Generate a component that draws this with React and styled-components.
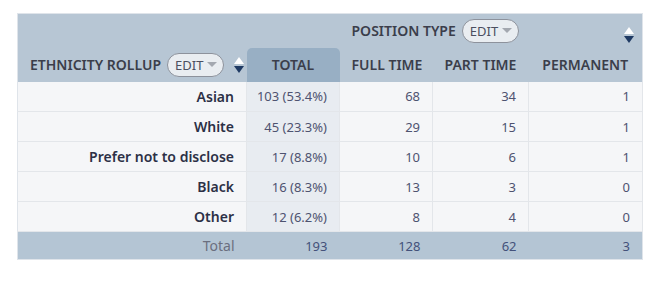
import styled, { createGlobalStyle } from "styled-components";

const Global = createGlobalStyle`
  body {
    margin: 0;
    background: #ffffff;
    font-family: "Noto Sans", "Open Sans", sans-serif;
  }
`;

const Page = styled.div`
  padding: 13px 0 0 17px;
`;

const Table = styled.table`
  width: 625px;
  table-layout: fixed;
  border-collapse: collapse;
  border: 1px solid #dfe4ea;
  font-size: 14px;
`;

const HeadRow = styled.tr`
  background: #b7c6d4;
  height: 34px;
`;

const HeadCell = styled.th`
  padding: 0 12px;
  font-weight: 600;
  color: #3b3e4b;
  text-align: ${(p) => p.$align || "center"};
  vertical-align: middle;
  white-space: nowrap;
  position: relative;
`;

const TotalTab = styled.div`
  background: #98afc4;
  border-radius: 5px 5px 0 0;
  height: 34px;
  margin: 0 -12px;
  display: flex;
  align-items: center;
  justify-content: center;
`;

const HeadInner = styled.div`
  display: flex;
  align-items: center;
  gap: 6px;
`;

const Pill = styled.span`
  display: inline-flex;
  align-items: center;
  gap: 4px;
  height: 22px;
  padding: 0 6px 0 7px;
  border: 1px solid #8d929c;
  border-radius: 12px;
  background: #e9edf1;
  color: #4b4f60;
  font-size: 13px;
  font-weight: 400;
`;

const Caret = styled.span`
  width: 0;
  height: 0;
  border-left: 5px solid transparent;
  border-right: 5px solid transparent;
  border-top: 5px solid #a3a8b0;
`;

const SortBox = styled.span`
  display: inline-flex;
  flex-direction: column;
  gap: 2px;
  margin-left: ${(p) => p.$ml || "0"};
`;

const Tri = styled.span`
  width: 0;
  height: 0;
  border-left: 5px solid transparent;
  border-right: 5px solid transparent;
  ${(p) =>
    p.$up
      ? "border-bottom: 7px solid #ffffff;"
      : "border-top: 7px solid #1f3a63;"}
`;

const CornerSort = styled.span`
  position: absolute;
  right: 8px;
  top: 50%;
  transform: translateY(-50%);
`;

const Row = styled.tr`
  height: 30px;
  background: #f5f6f8;
  border-bottom: 1px solid #e3e6ea;
`;

const Label = styled.td`
  padding: 0 12px;
  text-align: right;
  font-weight: 600;
  color: #2c3046;
  white-space: nowrap;
  border-right: 1px solid #e3e6ea;
`;

const Num = styled.td`
  padding: 0 12px 0 0;
  text-align: right;
  font-size: 13px;
  color: #4e5370;
  font-weight: 400;
  white-space: nowrap;
  background: ${(p) => (p.$total ? "#e8ecf1" : "transparent")};
  border-right: 1px solid #e3e6ea;
`;

const FootRow = styled.tr`
  height: 28px;
  background: #b4c5d4;
`;

const FootLabel = styled.td`
  padding: 0 12px;
  text-align: right;
  color: #6b6f7f;
`;

const FootNum = styled.td`
  padding: 0 12px 0 0;
  text-align: right;
  font-size: 13px;
  color: #43517a;
`;

const Sort = ({ ml }) => (
  <SortBox $ml={ml}>
    <Tri $up />
    <Tri />
  </SortBox>
);

const Edit = () => (
  <Pill>
    EDIT
    <Caret />
  </Pill>
);

const rows = [
  ["Asian", "103 (53.4%)", 68, 34, 1],
  ["White", "45 (23.3%)", 29, 15, 1],
  ["Prefer not to disclose", "17 (8.8%)", 10, 6, 1],
  ["Black", "16 (8.3%)", 13, 3, 0],
  ["Other", "12 (6.2%)", 8, 4, 0],
];

export default function App() {
  return (
    <Page>
      <Global />
      <Table>
        <colgroup>
          <col style={{ width: 229 }} />
          <col style={{ width: 93 }} />
          <col style={{ width: 93 }} />
          <col style={{ width: 96 }} />
          <col style={{ width: 114 }} />
        </colgroup>
        <thead>
          <HeadRow>
            <HeadCell />
            <HeadCell />
            <HeadCell colSpan={3} $align="left">
              <HeadInner>
                POSITION TYPE <Edit />
              </HeadInner>
              <CornerSort>
                <Sort />
              </CornerSort>
            </HeadCell>
          </HeadRow>
          <HeadRow>
            <HeadCell $align="left">
              <HeadInner>
                ETHNICITY ROLLUP <Edit />
                <Sort ml="4px" />
              </HeadInner>
            </HeadCell>
            <HeadCell>
              <TotalTab>TOTAL</TotalTab>
            </HeadCell>
            <HeadCell>FULL TIME</HeadCell>
            <HeadCell>PART TIME</HeadCell>
            <HeadCell>PERMANENT</HeadCell>
          </HeadRow>
        </thead>
        <tbody>
          {rows.map((r) => (
            <Row key={r[0]}>
              <Label>{r[0]}</Label>
              <Num $total>{r[1]}</Num>
              <Num>{r[2]}</Num>
              <Num>{r[3]}</Num>
              <Num>{r[4]}</Num>
            </Row>
          ))}
          <FootRow>
            <FootLabel>Total</FootLabel>
            <FootNum>193</FootNum>
            <FootNum>128</FootNum>
            <FootNum>62</FootNum>
            <FootNum>3</FootNum>
          </FootRow>
        </tbody>
      </Table>
    </Page>
  );
}
